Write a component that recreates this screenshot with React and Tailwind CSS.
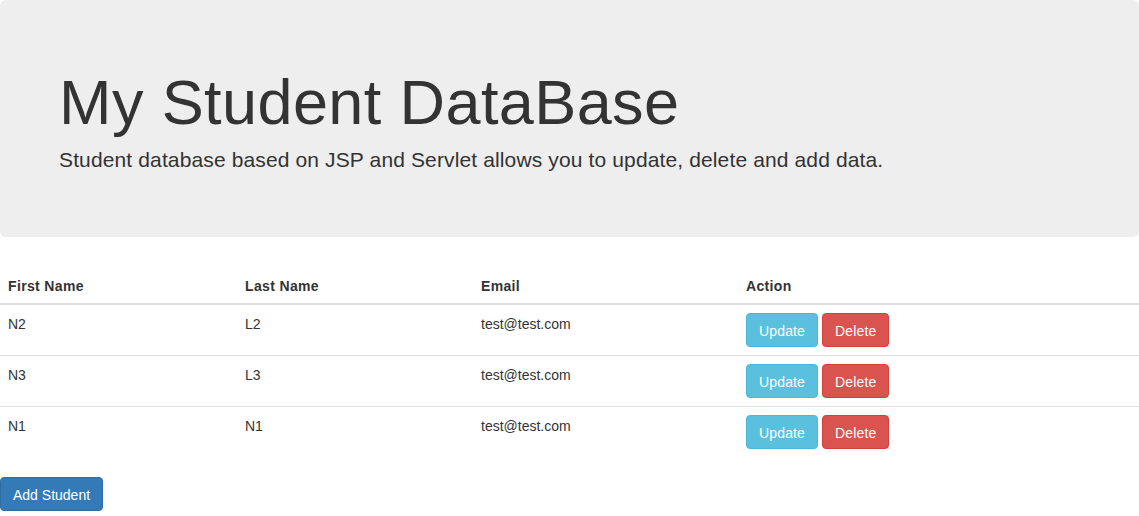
import React from "react";

const students = [
    { first: "N2", last: "L2", email: "test@test.com" },
    { first: "N3", last: "L3", email: "test@test.com" },
    { first: "N1", last: "N1", email: "test@test.com" },
];

export default function App() {
    return (
        <div className="min-h-screen bg-white text-[14px] leading-[20px] text-[#333] font-['Liberation_Sans',Arial,sans-serif]">
            {/* Jumbotron */}
            <div className="bg-[#eee] rounded-md px-[59px] pt-[48px] pb-[47px] mb-[30px]">
                <h1 className="mt-[20px] mb-[8px] text-[63px] leading-[1.1] font-normal tracking-[0.4px]">My Student DataBase</h1>
                <p className="mb-[15px] text-[21px] leading-[30px] font-extralight tracking-[0.13px]">
                    Student database based on JSP and Servlet allows you to update, delete and add data.
                </p>
            </div>

            {/* Students table */}
            <table className="w-full border-collapse mb-[20px]">
                <thead>
                    <tr>
                        <th className="w-[237px] px-2 pt-[9px] pb-[7px] text-left font-bold tracking-[0.35px] align-bottom border-b-2 border-[#ddd]">First Name</th>
                        <th className="w-[236px] px-2 pt-[9px] pb-[7px] text-left font-bold tracking-[0.35px] align-bottom border-b-2 border-[#ddd]">Last Name</th>
                        <th className="w-[265px] px-2 pt-[9px] pb-[7px] text-left font-bold tracking-[0.35px] align-bottom border-b-2 border-[#ddd]">Email</th>
                        <th className="px-2 pt-[9px] pb-[7px] text-left font-bold tracking-[0.35px] align-bottom border-b-2 border-[#ddd]">Action</th>
                    </tr>
                </thead>
                <tbody>
                    {students.map((s, i) => (
                        <tr key={i} className="border-t border-[#ddd]">
                            <td className="px-2 pt-[9px] pb-[7px] align-top">{s.first}</td>
                            <td className="px-2 pt-[9px] pb-[7px] align-top">{s.last}</td>
                            <td className="px-2 pt-[9px] pb-[7px] align-top">{s.email}</td>
                            <td className="p-2 align-top">
                                <div className="flex gap-[4px]">
                                    <button className="px-3 pt-[7px] pb-[5px] border border-[#46b8da] bg-[#5bc0de] text-white rounded tracking-[0.15px]">Update</button>
                                    <button className="px-3 pt-[7px] pb-[5px] border border-[#d43f3a] bg-[#d9534f] text-white rounded tracking-[0.15px]">Delete</button>
                                </div>
                            </td>
                        </tr>
                    ))}
                </tbody>
            </table>

            <button className="px-3 pt-[7px] pb-[5px] border border-[#2e6da4] bg-[#337ab7] text-white rounded">Add Student</button>
        </div>
    );
}
